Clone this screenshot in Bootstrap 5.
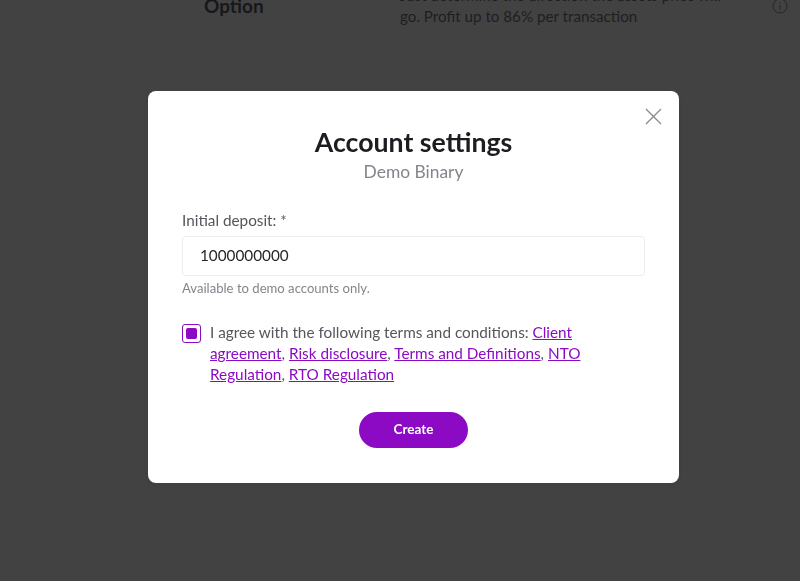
<!DOCTYPE html>
<html lang="en">
<head>
<meta charset="utf-8">
<title>Account settings</title>
<link href="https://cdn.jsdelivr.net/npm/bootstrap@5.3.0/dist/css/bootstrap.min.css" rel="stylesheet">
<style>
html,body{height:100%;}
body{background:#424242;overflow:hidden;font-family:"Lato","Noto Sans",sans-serif;color:#54545a;}
.back-row{height:60px;margin-top:-15px;color:#1d1d22;}
.back-name{width:196px;margin-left:204px;margin-top:8px;font-size:19px;font-weight:700;line-height:26px;color:#17171b;}
.back-desc{width:335px;font-size:15.2px;line-height:21px;color:#1e1e22;}
.back-info{margin-left:37px;margin-top:13px;width:16px;height:16px;}
.sheet{position:fixed;left:148px;top:91px;width:531px;height:392px;background:#fff;border-radius:8px;padding:0 34px;}
.close-x{position:absolute;left:496px;top:16px;width:19px;height:19px;padding:0;background:none;border:0;line-height:0;}
.sheet-title{margin:33px 0 0;font-size:26.7px;line-height:36px;font-weight:700;color:#1c1c21;text-align:center;}
.sheet-sub{font-size:17.4px;line-height:24px;color:#84848c;text-align:center;margin-top:0;}
.field-label{margin:25px 0 5px;font-size:15.3px;line-height:22px;color:#55555b;}
.dep-input{height:40px;border:1px solid #ededf0;border-radius:4px;padding:0 17px 2px;font-size:15.3px;color:#26262b;font-family:inherit;box-shadow:none;}
.hint{margin-top:3px;font-size:13.1px;line-height:18px;color:#85858c;}
.agree{margin-top:25px;gap:9px;}
.tick{flex:none;width:19px;height:19px;border:1px solid #8c0ac4;border-radius:3px;margin-top:2px;}
.tick-in{width:11px;height:11px;background:#8c0ac4;border-radius:2px;}
.agree-text{font-size:15.3px;line-height:21px;color:#56565c;}
.agree-text a{color:#8c0ac4;}
.create-btn{width:109px;height:36px;margin-top:27px;background:#8c0ac4;border:0;border-radius:18px;color:#fff;font-size:13.5px;font-weight:700;padding:0 0 2px;}
</style>
</head>
<body>
<div class="d-flex back-row">
  <div class="back-name">Option</div>
  <div class="back-desc">Just determine the direction the assets price will go. Profit up to 86% per transaction</div>
  <svg class="back-info" viewBox="0 0 16 16" fill="none" stroke="#262628" stroke-width="1"><circle cx="8" cy="8" r="7"/><path d="M8 7v5M8 4.2v1.2"/></svg>
</div>
<div class="sheet shadow-sm">
  <button class="close-x" type="button" aria-label="Close"><svg width="19" height="19" viewBox="0 0 19 19" fill="none" stroke="#8b8b92" stroke-width="1.3"><path d="M2 2l15 15M17 2L2 17"/></svg></button>
  <h1 class="sheet-title">Account settings</h1>
  <div class="sheet-sub">Demo Binary</div>
  <label class="field-label d-block" for="dep">Initial deposit: *</label>
  <input id="dep" class="form-control dep-input" value="1000000000">
  <div class="hint">Available to demo accounts only.</div>
  <div class="d-flex agree">
    <span class="tick d-flex align-items-center justify-content-center"><span class="tick-in"></span></span>
    <div class="agree-text">I agree with the following terms and conditions: <a href="#">Client agreement</a>, <a href="#">Risk disclosure</a>, <a href="#">Terms and Definitions</a>, <a href="#">NTO Regulation</a>, <a href="#">RTO Regulation</a></div>
  </div>
  <div class="text-center"><button class="btn create-btn" type="button">Create</button></div>
</div>
<script src="https://cdn.jsdelivr.net/npm/bootstrap@5.3.0/dist/js/bootstrap.bundle.min.js"></script>
</body>
</html>
